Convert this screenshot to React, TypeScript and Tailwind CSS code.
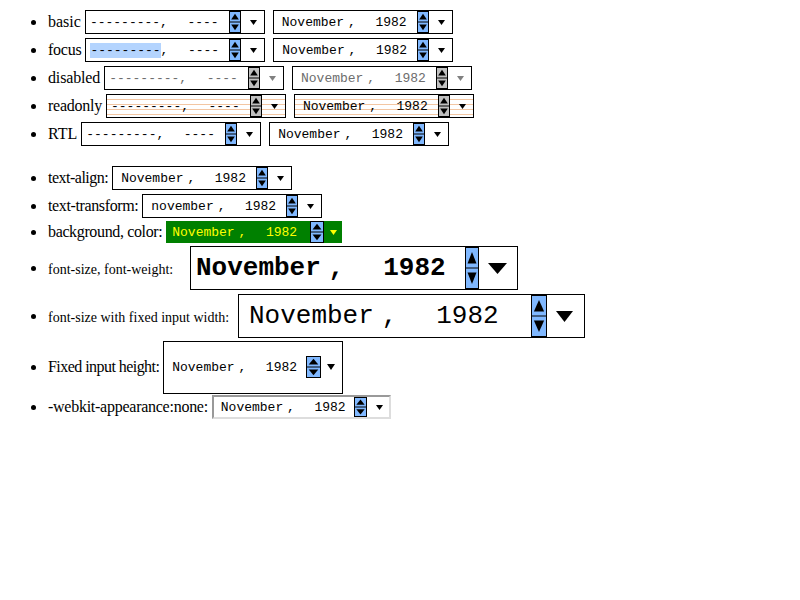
import React from 'react';

type State = 'normal' | 'focus' | 'disabled' | 'readonly';

const Spinner = ({ w, h, gray = false }: { w: number; h: number; gray?: boolean }) => {
  const mid = h / 2;
  const ux0 = w * 0.18, ux1 = w * 0.82, cx = w / 2;
  return (
    <svg width={w} height={h} viewBox={`0 0 ${w} ${h}`} className="block shrink-0">
      <rect x="0.5" y="0.5" width={w - 1} height={h - 1} fill={gray ? '#c0c0c0' : '#80b8ff'} stroke="#000" />
      <line x1="0" y1={mid} x2={w} y2={mid} stroke="#000" />
      <polygon points={`${ux0},${h * 0.39} ${ux1},${h * 0.39} ${cx},${h * 0.12}`} fill="#000" />
      <polygon points={`${ux0},${h * 0.61} ${ux1},${h * 0.61} ${cx},${h * 0.88}`} fill="#000" />
    </svg>
  );
};

const Arrow = ({ w, h, color = '#000' }: { w: number; h: number; color?: string }) => (
  <svg width={w} height={h} viewBox={`0 0 ${w} ${h}`} className="block shrink-0">
    <polygon points={`0,0 ${w},0 ${w / 2},${h}`} fill={color} />
  </svg>
);

type InputProps = {
  empty?: boolean;
  month?: string;
  state?: State;
  box?: string;
  lead?: string;
  spin?: [number, number];
  arrow?: [number, number];
  arrowGap?: string;
  arrowColor?: string;
};

const BASE_BOX = 'h-[24px] w-[180px] border border-black bg-white text-[13px] leading-[15px] pl-[4px] pr-[7px]';

function MonthInput({
  empty = false,
  month = 'November',
  state = 'normal',
  box = BASE_BOX,
  lead = '',
  spin = [12, 22],
  arrow = [7, 5],
  arrowGap = 'ml-[9px]',
  arrowColor,
}: InputProps) {
  const stateBox =
    state === 'disabled'
      ? 'bg-[#ebebe4] text-[#6d6d6d] border-[#404040]'
      : state === 'readonly'
        ? 'bg-[repeating-linear-gradient(to_bottom,transparent_0px,transparent_4px,#f3c6a2_4px,#f3c6a2_5px)]'
        : state === 'focus'
          ? 'border-[#e59700]'
          : '';
  const gray = state === 'disabled' || state === 'readonly';
  const arrowFill = arrowColor ?? (state === 'disabled' ? '#808080' : '#000');
  return (
    <div className={`flex items-center shrink-0 font-['Liberation_Mono',monospace] ${box} ${stateBox}`}>
      <span className={`w-[9ch] text-center ${lead} ${state === 'focus' ? 'bg-[#b4d4fe]' : ''}`}>
        {empty ? '---------' : month}
      </span>
      <span className="whitespace-pre">,  </span>
      <span className="w-[5ch] text-center">{empty ? '----' : '1982'}</span>
      <div className="ml-auto">
        <Spinner w={spin[0]} h={spin[1]} gray={gray} />
      </div>
      <div className={arrowGap}>
        <Arrow w={arrow[0]} h={arrow[1]} color={arrowFill} />
      </div>
    </div>
  );
}

const Bullet = () => <span className="block w-[5px] h-[5px] rounded-full bg-black ml-[31px] mr-[12px] shrink-0" />;

const Row = ({ h = 'h-[28px]', children }: { h?: string; children: React.ReactNode }) => (
  <li className={`flex items-center ${h}`}>
    <Bullet />
    {children}
  </li>
);

const Label = ({ text, cls = '' }: { text: string; cls?: string }) => (
  <span className={`whitespace-nowrap mr-[4px] ${cls}`}>{text}</span>
);

export default function App() {
  return (
    <div className="w-[800px] h-[600px] bg-white text-black font-['Liberation_Serif',serif] text-[16px] leading-[20px] overflow-hidden">
      <ul className="pt-[8px]">
        <Row>
          <Label text="basic" />
          <MonthInput empty />
          <div className="w-[8px]" />
          <MonthInput />
        </Row>
        <Row>
          <Label text="focus" cls="tracking-[-0.25px]" />
          <MonthInput empty state="focus" />
          <div className="w-[8px]" />
          <MonthInput />
        </Row>
        <Row>
          <Label text="disabled" cls="tracking-[-0.15px]" />
          <MonthInput empty state="disabled" />
          <div className="w-[8px]" />
          <MonthInput state="disabled" />
        </Row>
        <Row>
          <Label text="readonly" cls="tracking-[-0.25px]" />
          <MonthInput empty state="readonly" />
          <div className="w-[8px]" />
          <MonthInput state="readonly" />
        </Row>
        <Row>
          <Label text="RTL" />
          <MonthInput empty />
          <div className="w-[8px]" />
          <MonthInput />
        </Row>
      </ul>

      <ul className="mt-[16px]">
        <Row>
          <Label text="text-align:" cls="tracking-[-0.5px]" />
          <MonthInput />
        </Row>
        <Row>
          <Label text="text-transform:" cls="tracking-[-0.37px]" />
          <MonthInput month="november" />
        </Row>
        <Row h="h-[24px]">
          <Label text="background, color:" cls="tracking-[-0.36px]" />
          <MonthInput
            box="h-[22px] w-[176px] bg-[#008000] text-[#ffff00] text-[13px] leading-[15px] pl-[2px] pr-[5px]"
            spin={[14, 22]}
            arrowColor="#ffff00"
            arrowGap="ml-[6px]"
          />
        </Row>
        <Row h="h-[48px]">
          <Label text="font-size, font-weight:" cls="text-[14px] mr-[17px] mt-[3px]" />
          <MonthInput
            box="h-[44px] w-[328px] border border-black bg-white text-[26px] leading-[30px] font-bold pl-0 pr-[10px]"
            lead="-ml-[3px]"
            spin={[14, 42]}
            arrow={[19, 11]}
            arrowGap="ml-[9px]"
          />
        </Row>
        <Row h="h-[48px]">
          <Label text="font-size with fixed input width:" cls="text-[14px] mr-[9px] mt-[3px]" />
          <MonthInput
            box="h-[44px] w-[347px] border border-black bg-white text-[26px] leading-[30px] pl-[2px] pr-[11px]"
            spin={[16, 42]}
            arrow={[17, 11]}
            arrowGap="ml-[9px]"
          />
        </Row>
        <Row h="h-[54px]">
          <Label text="Fixed input height:" cls="tracking-[-0.55px]" />
          <MonthInput box="h-[53px] w-[180px] border border-black bg-white text-[13px] leading-[15px] pl-[4px] pr-[7px]" spin={[15, 22]} arrow={[8, 6]} arrowGap="ml-[6px]" />
        </Row>
        <Row h="h-[26px]">
          <Label text="-webkit-appearance:none:" cls="tracking-[-0.26px]" />
          <MonthInput
            box="h-[24px] w-[179px] border-2 border-t-[#999] border-l-[#999] border-r-[#ddd] border-b-[#ddd] bg-white text-[13px] leading-[15px] pl-[3px] pr-[6px]"
            spin={[13, 20]}
          />
        </Row>
      </ul>
    </div>
  );
}
